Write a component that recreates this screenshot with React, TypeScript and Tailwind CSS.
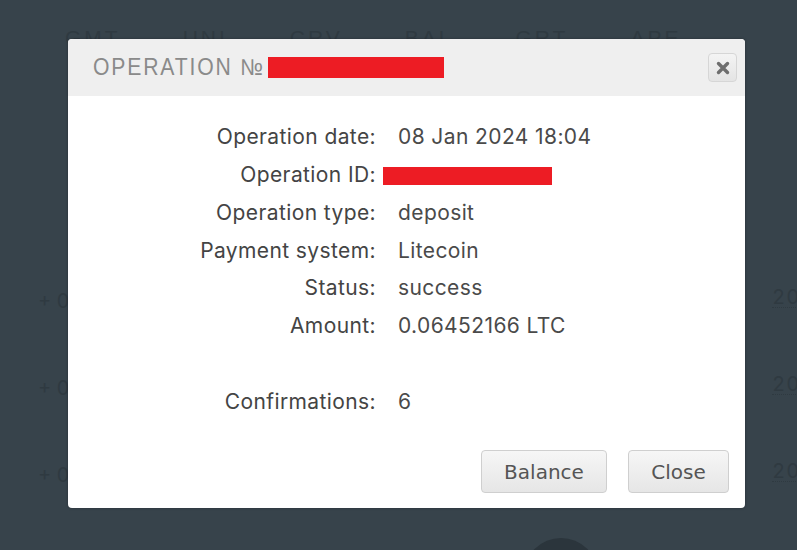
import React from "react";

const rows: [string, React.ReactNode][] = [
  ["Operation date:", "08 Jan 2024 18:04"],
  ["Operation ID:", <span className="inline-block ml-[-15px] w-[169px] h-[18px] bg-[#ed1c24] align-middle" />],
  ["Operation type:", "deposit"],
  ["Payment system:", "Litecoin"],
  ["Status:", "success"],
  ["Amount:", "0.06452166 LTC"],
];

export default function App() {
  return (
    <div className="relative w-[797px] h-[550px] overflow-hidden bg-[#37434b] font-['Inter',sans-serif]">
      {/* background page */}
      <div className="flex gap-[62px] pl-[65px] pt-[22px] text-[21px] tracking-[3px] text-[#2f3a41] font-['Liberation_Sans',sans-serif]">
        {["GMT", "UNI", "CRV", "BAL", "GRT", "APE"].map((t) => (
          <span key={t}>{t}</span>
        ))}
      </div>
      <div className="flex flex-col gap-[65px] pt-[232px] pl-[38px] w-[830px] text-[20px] text-[#2f3a41]">
        {[0, 1, 2].map((i) => (
          <div key={i} className="flex justify-between h-[22px]">
            <span>+ 0</span>
            <span className="border-b border-dotted border-[#2f3a41] leading-[22px] tracking-[2px]">2024</span>
          </div>
        ))}
      </div>
      <div className="absolute left-[524px] top-[538px] w-[74px] h-[74px] rounded-full bg-[#2b353c]" />

      {/* modal */}
      <div className="absolute left-[68px] top-[39px] w-[677px] h-[469px] rounded-[4px] bg-white overflow-hidden flex flex-col shadow-[0_0_3px_rgba(0,0,0,0.3)]">
        <div className="h-[57px] bg-[#efefef] flex items-center pl-[25px] pr-[8px]">
          <span className="text-[23px] tracking-[2px] text-[#8a8a8a] font-['Liberation_Sans',sans-serif] scale-x-[0.92] origin-left">
            OPERATION №
          </span>
          <span className="ml-[-12px] w-[176px] h-[21px] bg-[#ed1c24]" />
          <div className="ml-auto w-[29px] h-[29px] rounded-[4px] border border-[#d6d6d6] bg-gradient-to-b from-[#f4f4f4] to-[#e4e4e4] flex items-center justify-center">
            <svg width="14" height="14" viewBox="0 0 14 14">
              <path d="M2.5 2.5 L11.5 11.5 M11.5 2.5 L2.5 11.5" stroke="#6e6e6e" strokeWidth="3.4" strokeLinecap="round" />
            </svg>
          </div>
        </div>
        <div className="pt-[22px] text-[21px] tracking-[0.4px] text-[#444]">
          {rows.map(([l, v], i) => (
            <div key={i} className="flex h-[37.8px] items-center">
              <div className="w-[308px] text-right">{l}</div>
              <div className="pl-[22px] text-[#4a4a4a]">{v}</div>
            </div>
          ))}
          <div className="h-[37.8px]" />
          <div className="flex h-[37.8px] items-center">
            <div className="w-[308px] text-right">Confirmations:</div>
            <div className="pl-[22px] text-[#4a4a4a]">6</div>
          </div>
        </div>
        <div className="flex justify-end gap-[21px] pr-[16px] mt-[30px] font-['DejaVu_Sans',sans-serif] text-[20px] text-[#555]">
          <button className="w-[126px] h-[43px] rounded-[4px] border border-[#cfcfcf] bg-gradient-to-b from-[#f6f6f6] to-[#e6e6e6]">Balance</button>
          <button className="w-[101px] h-[43px] rounded-[4px] border border-[#cfcfcf] bg-gradient-to-b from-[#f6f6f6] to-[#e6e6e6]">Close</button>
        </div>
      </div>
    </div>
  );
}
